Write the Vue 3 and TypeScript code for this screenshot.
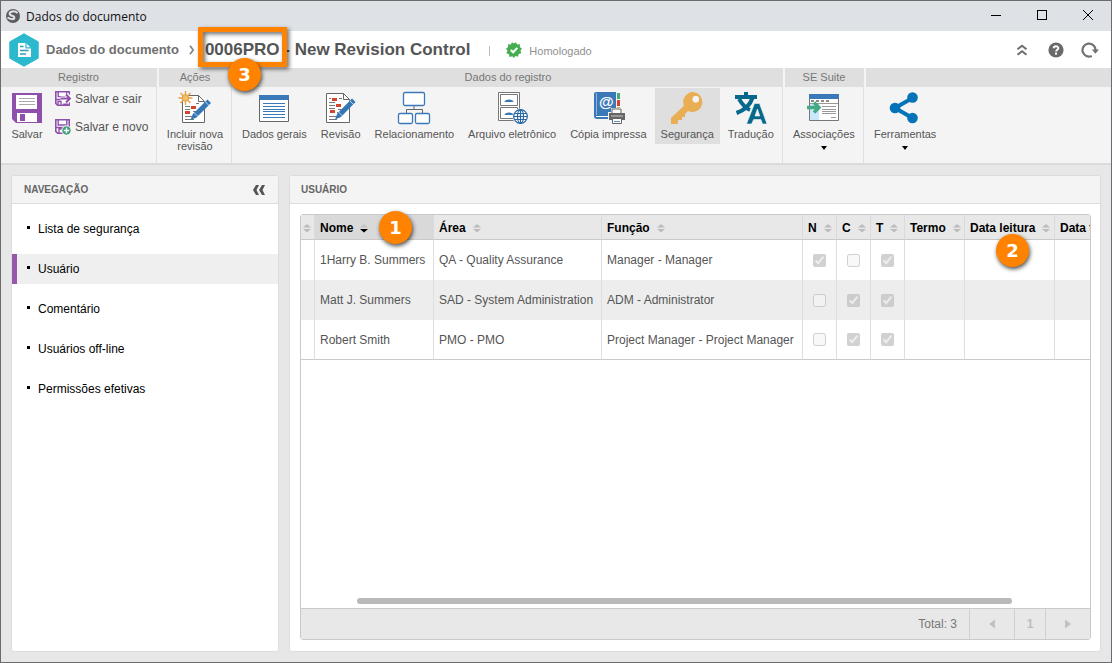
<script setup lang="ts">
import { ref } from 'vue'

interface NavItem { id: string; label: string }
interface Row { name: string; area: string; role: string; n: boolean; c: boolean; t: boolean }
interface Column { key: string; label: string; sorted?: boolean; callout?: number }

const navItems: NavItem[] = [
  { id: 'lista', label: 'Lista de segurança' },
  { id: 'usuario', label: 'Usuário' },
  { id: 'comentario', label: 'Comentário' },
  { id: 'offline', label: 'Usuários off-line' },
  { id: 'permissoes', label: 'Permissões efetivas' },
]
const active = ref('usuario')

const columns: Column[] = [
  { key: 'flag', label: '' },
  { key: 'nome', label: 'Nome', sorted: true, callout: 1 },
  { key: 'area', label: 'Área' },
  { key: 'funcao', label: 'Função' },
  { key: 'n', label: 'N' },
  { key: 'c', label: 'C' },
  { key: 't', label: 'T' },
  { key: 'termo', label: 'Termo' },
  { key: 'leitura', label: 'Data leitura', callout: 2 },
  { key: 'treino', label: 'Data treinamento' },
]

const rows: Row[] = [
  { name: '1Harry B. Summers', area: 'QA - Quality Assurance', role: 'Manager - Manager', n: true, c: false, t: true },
  { name: 'Matt J. Summers', area: 'SAD - System Administration', role: 'ADM - Administrator', n: false, c: true, t: true },
  { name: 'Robert Smith', area: 'PMO - PMO', role: 'Project Manager - Project Manager', n: false, c: true, t: true },
]
</script>

<template>
  <div class="window">
    <header class="titlebar">
      <svg class="app-icon" width="16" height="16" viewBox="0 0 16 16">
        <circle cx="8" cy="8" r="7" fill="#5c5c60" />
        <path d="M12.5 5.2C10 2.4 4.600 3 4.600 5.800C4.600 8.300 9.400 7.200 9.400 9.500C9.400 11.600 6 11.800 2.500 9.500" fill="none" stroke="#dfe2e7" stroke-width="2" />
      </svg>
      <span class="window-title">Dados do documento</span>
      <div class="window-controls">
        <button type="button" aria-label="Minimizar"><svg width="12" height="12" viewBox="0 0 12 12"><path d="M1 5.5h10" stroke="#000" /></svg></button>
        <button type="button" aria-label="Maximizar"><svg width="12" height="12" viewBox="0 0 12 12"><rect x="1.5" y="0.5" width="9" height="9" fill="none" stroke="#000" /></svg></button>
        <button type="button" aria-label="Fechar"><svg width="12" height="12" viewBox="0 0 12 12"><path d="M1 0l10 10M11 0L1 10" stroke="#000" fill="none" /></svg></button>
      </div>
    </header>

    <div class="crumbs">
      <svg class="hex" width="30" height="34" viewBox="0 0 30 34">
        <path d="M15 .8 L29.2 8.8 V25.2 L15 33.2 L.8 25.2 V8.8 Z" fill="#2cb8cd" stroke="#2cb8cd" stroke-width="1" stroke-linejoin="round" />
        <path d="M9 10h8l5 5v9H9z" fill="#fff" />
        <path d="M17 9.8v5h5" fill="none" stroke="#2cb8cd" stroke-width="1.2" />
        <path d="M11 13.5h3.5M11 17.5h8.5M11 21h6" stroke="#2a9fb4" stroke-width="1.4" />
      </svg>
      <a class="crumb" href="#">Dados do documento</a>
      <svg class="crumb-sep" width="6" height="10" viewBox="0 0 6 10"><path d="M1 .8 L4.2 5 L1 9.2" fill="none" stroke="#888" stroke-width="1.8" /></svg>
      <h1><span class="code">0006PRO<span class="callout c3">3</span></span> - New Revision Control</h1>
      <span class="bar"></span>
      <svg width="16" height="16" viewBox="0 0 16 16">
        <path d="M8 1.600L9.900 .2 11.200 2.600 14 2.300 13.800 5 16 6.700 14.400 8.700 15.400 11.300 12.700 12 12 14.700 9.300 14 8 16 6.200 14.200 3.500 15 3 12.200 .4 11.300 1.500 8.700 0 6.700 2.100 5 2 2.300 4.800 2.600 6.100 .2Z" fill="#46ad50" />
        <path d="M4.8 8l2.3 2.3 4.2-4.4" fill="none" stroke="#fff" stroke-width="2" />
      </svg>
      <span class="status">Homologado</span>
      <div class="tools">
        <button type="button" aria-label="Recolher"><svg width="18" height="18" viewBox="0 0 18 18"><path d="M4.500 8.300l4.500-3.600 4.500 3.600M4.500 13.800l4.500-3.600 4.500 3.600" fill="none" stroke="#6d6d6d" stroke-width="2" /></svg></button>
        <button type="button" aria-label="Ajuda"><svg width="18" height="18" viewBox="0 0 18 18"><circle cx="9" cy="9" r="7.6" fill="#6a6a6a" /><path d="M6.7 7.3C6.7 4.6 11.3 4.6 11.3 7.2C11.3 8.8 9.1 8.8 9.1 10.6" fill="none" stroke="#fff" stroke-width="1.9" /><rect x="8" y="11.6" width="2" height="2" fill="#fff" /></svg></button>
        <button type="button" aria-label="Atualizar"><svg width="18" height="18" viewBox="0 0 18 18"><path d="M10.8 14.9A6.5 6.5 0 1 1 14.5 9" fill="none" stroke="#727272" stroke-width="2.2" /><path d="M10.8 8.6h7.2l-3.6 4.2z" fill="#727272" /></svg></button>
      </div>
    </div>

    <div class="ribbon">
      <section class="group g-reg">
        <h2>Registro</h2>
        <div class="group-body">
          <button type="button" class="tool">
            <svg width="34" height="34" viewBox="0 0 34 34">
              <path d="M2 2h30v30H6l-4-4z" fill="#8f50ab" />
              <path d="M6 4h21v14H6z" fill="#fff" />
              <path d="M9 7.5h16M9 10.5h16M9 13.5h16" stroke="#aaa" />
              <path d="M7 22h20v9H7z" fill="#fff" />
              <path d="M10 23h5v7h-5z" fill="#8f50ab" />
            </svg>
            Salvar
          </button>
          <div class="stack">
            <button type="button" class="small-tool">
              <svg width="18" height="18" viewBox="0 0 18 18">
                <path d="M1.8 1.8h13.4v13.4H3.6l-1.8-1.8z" fill="#fff" stroke="#8f50ab" stroke-width="1.6" />
                <path d="M4.2 2v4.6h8.6V2M2 9.500h6M4 15v-3.500h3v4" fill="none" stroke="#8f50ab" stroke-width="1.4" />
                <path d="M6.5 8.5h10M12.5 4.5l4 4-4 4" fill="none" stroke="#fff" stroke-width="4" />
                <path d="M6.5 8.5h9M12 4.5l4 4-4 4M9 14.400h5" fill="none" stroke="#8f50ab" stroke-width="2" />
              </svg>
              Salvar e sair
            </button>
            <button type="button" class="small-tool">
              <svg width="18" height="18" viewBox="0 0 18 18">
                <path d="M1.8 1.8h13.4v13.4H3.6l-1.8-1.8z" fill="#fff" stroke="#8f50ab" stroke-width="1.6" />
                <path d="M4.2 2v5h8.6V2M2 9.500h13M5 15v-4h4" fill="none" stroke="#8f50ab" stroke-width="1.4" />
                <circle cx="12.5" cy="12.5" r="4.7" fill="#3e9d77" stroke="#fff" />
                <path d="M9.8 12.5h5.4M12.5 9.8v5.4" stroke="#fff" stroke-width="1.4" />
              </svg>
              Salvar e novo
            </button>
          </div>
        </div>
      </section>

      <section class="group g-act">
        <h2>Ações</h2>
        <div class="group-body">
          <button type="button" class="tool narrow">
            <svg width="34" height="34" viewBox="0 0 34 34">
              <path d="M4.500 4.500h16l6 6v21h-22z" fill="#fff" stroke="#666" />
              <path d="M20.500 4.500v6h6" fill="none" stroke="#666" />
              <path d="M7 15.5h5M7 18.5h5M15 20.5h4M15 23.5h4M7 25.500h7M7 28.5h9M18 12.5h3" stroke="#777" />
              <path d="M13 15h5v3h-5zM7 20h5v3H7z" fill="#d0452c" />
              <path d="M29.500 8.500l3.500 3.500-14.500 14.500-6 2.500 2.300-6z" fill="#3576b5" />
              <path d="M27 10.500l4 4M16 21.500l4 4" stroke="#fff" stroke-width=".7" />
              <path d="M7.5 0v14M.5 7h14M2.5 2l10 10M12.5 2l-10 10" stroke="#e2a343" stroke-width="1.4" />
              <circle cx="7.5" cy="7" r="3.3" fill="#f0bd69" stroke="#e2a343" />
            </svg>
            Incluir nova revisão
          </button>
        </div>
      </section>

      <section class="group g-data">
        <h2>Dados do registro</h2>
        <div class="group-body">
          <button type="button" class="tool">
            <svg width="34" height="34" viewBox="0 0 34 34">
              <path d="M2.5 4.5h29v26h-29z" fill="#fff" stroke="#666" />
              <path d="M2 4h30v5H2z" fill="#3b78b8" />
              <path d="M6 12.5h22M6 15.5h22M6 18.5h22M6 20.500h22M6 23.500h22M6 26.5h22" stroke="#3b78b8" />
            </svg>
            Dados gerais
          </button>
          <button type="button" class="tool">
            <svg width="34" height="34" viewBox="0 0 34 34">
              <path d="M2.500 2.500h17l6 6v23h-23z" fill="#fff" stroke="#666" />
              <path d="M19.500 2.500v6h6" fill="none" stroke="#666" />
              <path d="M5 11.5h6M5 14.5h6M14 18.500h4M5 17.500h6M13 21.5h4M5 25.5h8M5 28.5h8M5 7.5h2M15 7.5h3" stroke="#777" />
              <path d="M8 7h5v3H8zM12 13h5v3h-5zM6 19h5v3H6z" fill="#d0452c" />
              <path d="M28 7.500l3.500 3.500L17 26l-6 2.500 2.300-6z" fill="#3576b5" />
              <path d="M25.500 9.500l4 4M14.500 21l4 4" stroke="#fff" stroke-width=".7" />
            </svg>
            Revisão
          </button>
          <button type="button" class="tool">
            <svg width="34" height="34" viewBox="0 0 34 34">
              <path d="M17 15v4M9.5 22v-3.5h16V22" fill="none" stroke="#666" />
              <rect x="6.500" y="1.500" width="21" height="13" rx="1.5" fill="#fff" stroke="#3b78b8" stroke-width="1.3" />
              <rect x="1.500" y="22.500" width="14" height="10" rx="1.5" fill="#fff" stroke="#3b78b8" stroke-width="1.3" />
              <rect x="18.500" y="22.500" width="14" height="10" rx="1.5" fill="#fff" stroke="#3b78b8" stroke-width="1.3" />
            </svg>
            Relacionamento
          </button>
          <button type="button" class="tool">
            <svg width="34" height="34" viewBox="0 0 34 34">
              <path d="M3.5 1.5h21v28h-21zM5.5 3.5h17v11h-17zM5.5 16.5h17v11h-17z" fill="#fff" stroke="#777" />
              <path d="M9.500 11c0-3.500 9-3.500 9 0zM9.500 24c0-3.500 9-3.500 9 0z" fill="#3b78b8" />
              <circle cx="25.5" cy="25.5" r="8" fill="#f4f4f4" />
              <circle cx="25.500" cy="25.500" r="6.600" fill="#fff" />
              <g fill="none" stroke="#2865a5" stroke-width="1.2"><circle cx="25.5" cy="25.5" r="6.8" /><ellipse cx="25.5" cy="25.5" rx="3" ry="6.6" /><path d="M19 25.5h13M25.5 19v13M20 22.500h11M20 28.500h11" /></g>
            </svg>
            Arquivo eletrônico
          </button>
          <button type="button" class="tool">
            <svg width="34" height="34" viewBox="0 0 34 34">
              <path d="M3 3q0-2 2-2h20v27H6q-3 0-3-3z" fill="#3b78b8" />
              <path d="M5 25.500h14" stroke="#fff" /><path d="M5.500 2v22" stroke="#8fb4da" />
              <path d="M26 2h3v6h-3z" fill="#46ad73" /><path d="M26 9h3v6h-3z" fill="#d0452c" /><path d="M26 16h3v3h-3z" fill="#e9af4b" />
              <text x="8" y="16" class="at">@</text>
              <path d="M17 21h3v-4h11v4h3v10H17z" fill="#f4f4f4" />
              <path d="M21 18h9v5h-9z" fill="#fff" stroke="#666" />
              <path d="M18 22h16v7H18z" fill="#666" />
              <path d="M20 25h12" stroke="#ccc" />
              <path d="M21.500 27.500h9v5h-9z" fill="#fff" stroke="#666" />
              <path d="M23 30.500h6" stroke="#5d95cd" />
            </svg>
            Cópia impressa
          </button>
          <button type="button" class="tool selected">
            <svg width="34" height="34" viewBox="0 0 34 34">
              <path fill="#e9ae52" fill-rule="evenodd" d="M23 1A10 10 0 1 1 18 20L15 23V26H12V29H8V32L7 33H1V27L14 14.8A10 10 0 0 1 23 1ZM25.8 5A3.2 3.2 0 1 0 25.8 11.4A3.2 3.2 0 0 0 25.8 5Z" />
              <circle cx="25.800" cy="8.200" r="3.200" fill="#f3f3f3" />
            </svg>
            Segurança
          </button>
          <button type="button" class="tool">
            <svg width="34" height="34" viewBox="0 0 34 34">
              <path d="M1 6h22M12 1v4M5 8C8 13 11 17 16 19M18.500 7C16 14 11 19 2.500 22" fill="none" stroke="#06698c" stroke-width="4" />
              <path d="M12.500 33L20.500 12.500h5L33 33h-4.500l-1.600-4.500h-7.200L17.500 33zM21 25h4.800l-2.400-7z" fill="#06698c" stroke="#f4f4f4" stroke-width=".6" fill-rule="evenodd" />
            </svg>
            Tradução
          </button>
        </div>
      </section>

      <section class="group g-suite">
        <h2>SE Suite</h2>
        <div class="group-body">
          <button type="button" class="tool">
            <svg width="34" height="34" viewBox="0 0 34 34">
              <path d="M2.5 3.5h29v26h-29z" fill="#fff" stroke="#777" />
              <path d="M3 13h9v16H3z" fill="#c9e8fb" />
              <path d="M2 3h30v5H2z" fill="#3b78b8" />
              <path d="M4 10h3M9 10h3M14 10h3M19 10h3" stroke="#666" stroke-width="1.4" />
              <path d="M3 12.5h28M15 15.500h14M15 18.5h14M15 20.5h14M15 22.5h14M24 26.5h5" stroke="#999" />
              <path d="M0 16.5h11.5M7 11.5l5 5-5 5" fill="none" stroke="#45aa83" stroke-width="3.4" />
            </svg>
            Associações
            <svg class="drop" width="6" height="4" viewBox="0 0 6 4"><path d="M0 0h6L3 4z" fill="#000" /></svg>
          </button>
        </div>
      </section>

      <section class="group g-tools">
        <h2></h2>
        <div class="group-body">
          <button type="button" class="tool">
            <svg width="34" height="34" viewBox="0 0 34 34">
              <path d="M24.5 7L7 17l17.500 10" fill="none" stroke="#0473b8" stroke-width="4" />
              <circle cx="24.500" cy="6.500" r="5.300" fill="#0473b8" /><circle cx="7" cy="17" r="5.300" fill="#0473b8" /><circle cx="24.500" cy="27" r="5.300" fill="#0473b8" />
            </svg>
            Ferramentas
            <svg class="drop" width="6" height="4" viewBox="0 0 6 4"><path d="M0 0h6L3 4z" fill="#000" /></svg>
          </button>
        </div>
      </section>
    </div>

    <div class="workspace">
      <nav class="panel nav">
        <div class="panel-head">
          <h3>NAVEGAÇÃO</h3>
          <button type="button" aria-label="Recolher navegação">
            <svg width="14" height="12" viewBox="0 0 14 12"><path d="M1 6L4 1h3L4.500 6 7 11H4zM7 6l3-5h3l-2.500 5L13 11h-3z" fill="#555" /></svg>
          </button>
        </div>
        <ul>
          <li v-for="item in navItems" :key="item.id">
            <a href="#" :class="{ active: active === item.id }" @click.prevent="active = item.id">{{ item.label }}</a>
          </li>
        </ul>
      </nav>

      <main class="panel main">
        <div class="panel-head"><h3>USUÁRIO</h3></div>
        <div class="grid-frame">
          <div class="grid-scroll">
            <table>
              <colgroup><col v-for="c in columns" :key="c.key" :class="'col-' + c.key" /></colgroup>
              <thead>
                <tr>
                  <th v-for="c in columns" :key="c.key" :class="{ sorted: c.sorted, first: c.key === 'flag' }" scope="col">
                    <span class="th-in">
                      <span v-if="c.label">{{ c.label }}</span>
                      <svg width="8" height="10" viewBox="0 0 8 10">
                        <path d="M0 4.500L4 1l4 3.500z" :fill="c.sorted ? '#c4c4c4' : '#bcbcbc'" />
                        <path d="M0 6h8L4 9.500z" :fill="c.sorted ? '#000' : '#bcbcbc'" />
                      </svg>
                    </span>
                    <span v-if="c.callout" :class="['callout', 'c' + c.callout]">{{ c.callout }}</span>
                  </th>
                </tr>
              </thead>
              <tbody>
                <tr v-for="r in rows" :key="r.name">
                  <td></td>
                  <td>{{ r.name }}</td>
                  <td>{{ r.area }}</td>
                  <td>{{ r.role }}</td>
                  <td class="check"><input type="checkbox" :checked="r.n" disabled :aria-label="'N: ' + r.name" /></td>
                  <td class="check"><input type="checkbox" :checked="r.c" disabled :aria-label="'C: ' + r.name" /></td>
                  <td class="check"><input type="checkbox" :checked="r.t" disabled :aria-label="'T: ' + r.name" /></td>
                  <td></td>
                  <td></td>
                  <td></td>
                </tr>
              </tbody>
            </table>
          </div>
          <div class="scroll-track"><div class="thumb"></div></div>
          <footer class="pager">
            <span class="total">Total: 3</span>
            <button type="button" class="step" disabled aria-label="Página anterior"><svg width="6" height="10" viewBox="0 0 6 10"><path d="M6 .5v9L0 5z" fill="#c2c2c2" /></svg></button>
            <button type="button" class="page" disabled>1</button>
            <button type="button" class="step" disabled aria-label="Próxima página"><svg width="6" height="10" viewBox="0 0 6 10"><path d="M0 .5v9L6 5z" fill="#c2c2c2" /></svg></button>
          </footer>
        </div>
      </main>
    </div>
  </div>
</template>

<style>
body { margin: 0; }
</style>

<style scoped>
* { box-sizing: border-box; }
.window {
  min-height: 100vh;
  display: flex;
  flex-direction: column;
  border: 1px solid #6b6b6d;
  background: #e7e7e7;
  font-family: "Liberation Sans", Arial, sans-serif;
  font-size: 12px;
  color: #555;
  overflow: hidden;
}
button { border: 0; background: none; padding: 0; margin: 0; font: inherit; color: inherit; cursor: pointer; }
svg { display: block; flex: none; }
h1, h2, h3, ul { margin: 0; padding: 0; }

.titlebar { display: flex; align-items: center; height: 30px; padding-left: 4px; background: #dee1e6; }
.window-title { margin-left: 5px; font: 12px "Open Sans", sans-serif; color: #111; }
.window-controls { margin-left: auto; display: flex; height: 100%; }
.window-controls button { width: 46px; display: flex; align-items: center; justify-content: center; }

.crumbs { display: flex; align-items: center; height: 37px; padding: 0 12px 0 8px; background: #fff; }
.crumb { margin-left: 7px; font-size: 13px; font-weight: bold; color: #707070; text-decoration: none; }
.crumb-sep { margin: 0 10px 0 10px; }
h1 { font-size: 17px; line-height: 20px; font-weight: bold; color: #555; white-space: nowrap; }
.code { position: relative; z-index: 2; }
.code::after {
  content: "";
  position: absolute;
  inset: -13px -7px -8px -7px;
  border: 5px solid #ff8200;
  filter: drop-shadow(2px 2px 2px rgba(0, 0, 0, 0.6));
}
.bar { width: 1px; height: 10px; margin: 3px 16px 0 19px; background: #bbb; }
.status { margin: 2px 0 0 7px; font-size: 11px; color: #909090; }
.tools { margin-left: auto; display: flex; gap: 16px; }

.callout {
  position: absolute;
  z-index: 3;
  width: 33px;
  height: 33px;
  border-radius: 50%;
  background: #ff8200;
  box-shadow: 1px 2px 4px rgba(0, 0, 0, 0.7);
  color: #fff;
  font: bold 18px/33px "DejaVu Sans", sans-serif;
  text-align: center;
}
.c1 { left: 64px; top: -4px; }
.c2 { left: 31px; top: 19px; }
.c3 { left: 23px; top: 18px; }

.ribbon { display: flex; height: 97px; background: #f4f4f4; border-bottom: 2px solid #dadada; }
.group { flex: none; display: flex; flex-direction: column; border-right: 1px solid #e0e0e0; }
.group h2 { height: 19px; margin-left: 2px; background: #dfdfdf; color: #777; font-size: 11px; line-height: 19px; font-weight: normal; text-align: center; }
.g-reg h2 { margin-left: 0; }
.g-reg { width: 156px; }
.g-act { width: 75px; }
.g-data { width: 551px; }
.g-suite { width: 81px; }
.g-tools { flex: 1; border-right: 0; }
.group-body { display: flex; align-items: flex-start; gap: 2px; padding: 1px 0 0 4px; }
.g-reg .group-body, .g-act .group-body { padding-left: 3px; }
.tool { display: flex; flex-direction: column; align-items: center; padding: 3px 6px; font-size: 11px; line-height: 12px; min-height: 56px; white-space: nowrap; }
.tool > svg:first-child { margin-bottom: 3px; }
.tool.narrow { width: 70px; white-space: normal; }
.tool.selected { background: #dfdfdf; }
.drop { margin-top: 6px; }
.at { font: bold 15px "Liberation Sans", sans-serif; fill: #fff; }
.stack { display: flex; flex-direction: column; gap: 10px; padding: 2px 0 0 2px; }
.small-tool { display: flex; align-items: center; gap: 3px; height: 18px; white-space: nowrap; }

.workspace { flex: 1; display: flex; gap: 10px; padding: 10px 10px 10px; }
.panel { background: #fff; border: 1px solid #dcdcdc; border-radius: 3px; display: flex; flex-direction: column; }
.panel-head { display: flex; align-items: center; justify-content: space-between; height: 28px; padding: 1px 12px 0; background: #f4f4f4; border-bottom: 1px solid #dcdcdc; }
.panel-head h3 { font-size: 10px; line-height: 12px; color: #666; }
.nav { flex: none; width: 268px; }
.nav ul { list-style: none; display: flex; flex-direction: column; gap: 10px; padding-top: 10px; }
.nav a { display: flex; align-items: center; height: 30px; border-left: 5px solid transparent; padding-left: 10px; color: #000; text-decoration: none; }
.nav a::before { content: ""; width: 3px; height: 3px; margin: 0 8px 4px 0; background: #000; }
.nav a.active { background: #efefef; border-left-color: #9457ab; }
.main { flex: 1; min-width: 0; }
.main .panel-head { padding-left: 11px; }

.grid-frame { flex: 1; display: flex; flex-direction: column; margin: 10px 9px 11px 10px; border: 1px solid #c9c9c9; border-radius: 3px; min-width: 0; }
.grid-scroll { flex: 1; overflow-x: clip; overflow-y: visible; }
table { table-layout: fixed; width: 854px; border-collapse: separate; border-spacing: 0; }
.col-flag { width: 14px; }
.col-nome { width: 119px; }
.col-area { width: 168px; }
.col-funcao { width: 201px; }
.col-n, .col-c, .col-t { width: 34px; }
.col-termo { width: 60px; }
.col-leitura { width: 90px; }
.col-treino { width: 100px; }
th { position: relative; height: 25px; padding: 2px 0 0 5px; background: #e8e8e8; border-right: 1px solid #dadada; border-bottom: 1px solid #c9c9c9; color: #000; font-weight: bold; text-align: left; white-space: nowrap; }
th.first { padding-left: 2px; }
th.sorted { background: #d9d9d9; }
.th-in { display: flex; align-items: center; gap: 7px; }
td { height: 40px; padding: 0 0 0 5px; border-right: 1px solid #dedede; white-space: nowrap; }
tbody tr:nth-child(even) { background: #ededed; }
tbody tr:last-child td { border-bottom: 1px solid #c9c9c9; }
td.check { padding: 0 1px 0 0; text-align: center; }
td input { display: block; width: 13px; height: 13px; margin: 0 auto; }
.scroll-track { height: 10px; padding: 0 78px 0 56px; }
.thumb { height: 6px; border-radius: 3px; background: #b9b9b9; }
.pager { display: flex; height: 31px; border-top: 1px solid #c9c9c9; background: #e8e8e8; }
.total { margin-left: auto; padding-right: 12px; line-height: 30px; color: #777; }
.pager button { display: flex; align-items: center; justify-content: center; border-left: 1px solid #d0d0d0; color: #bcbcbc; font-weight: bold; }
.step { width: 45px; }
.page { width: 31px; }
</style>
